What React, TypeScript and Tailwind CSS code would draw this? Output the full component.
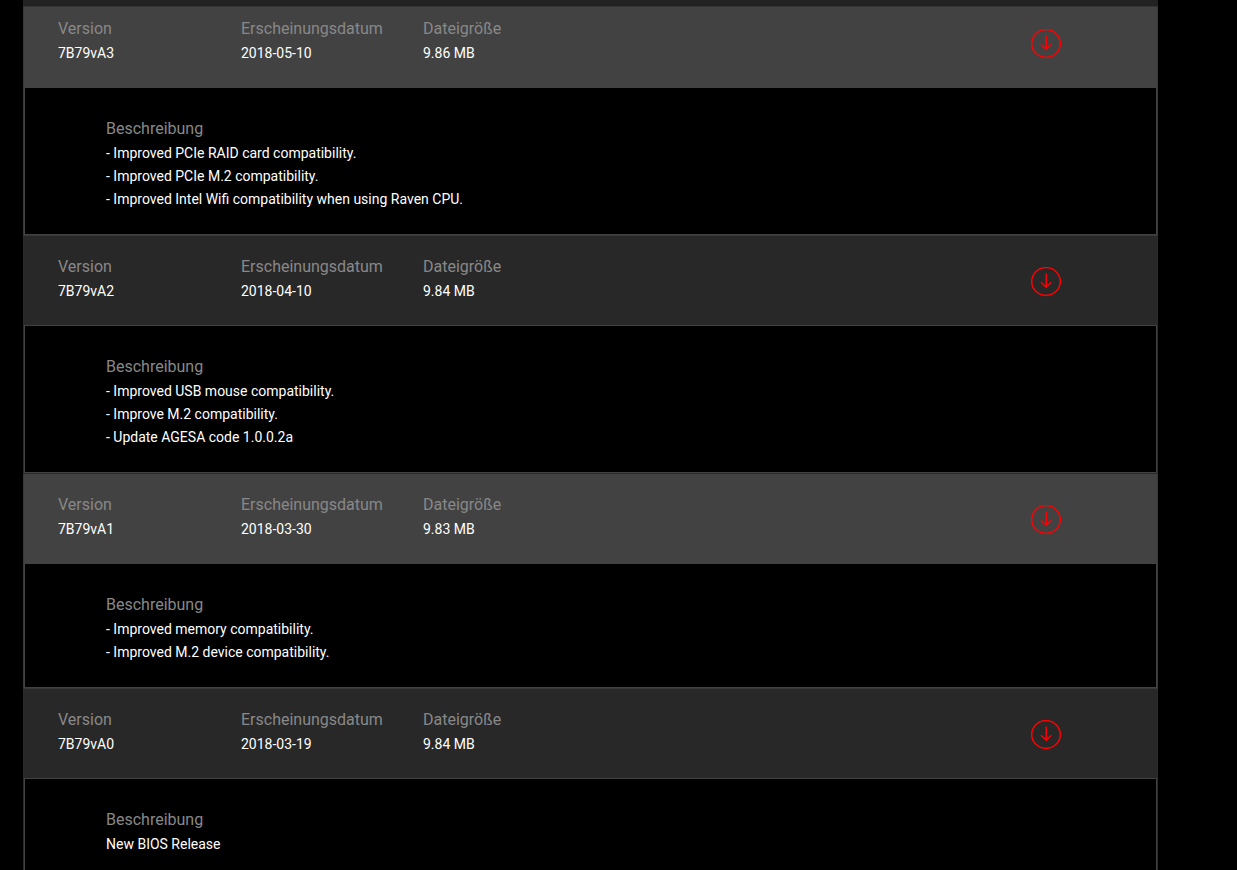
import clsx from 'clsx';

interface BiosRelease {
  version: string;
  date: string;
  size: string;
  notes: string[];
}

const releases: BiosRelease[] = [
  {
    version: '7B79vA3',
    date: '2018-05-10',
    size: '9.86 MB',
    notes: [
      '- Improved PCIe RAID card compatibility.',
      '- Improved PCIe M.2 compatibility.',
      '- Improved Intel Wifi compatibility when using Raven CPU.',
    ],
  },
  {
    version: '7B79vA2',
    date: '2018-04-10',
    size: '9.84 MB',
    notes: [
      '- Improved USB mouse compatibility.',
      '- Improve M.2 compatibility.',
      '- Update AGESA code 1.0.0.2a',
    ],
  },
  {
    version: '7B79vA1',
    date: '2018-03-30',
    size: '9.83 MB',
    notes: ['- Improved memory compatibility.', '- Improved M.2 device compatibility.'],
  },
  {
    version: '7B79vA0',
    date: '2018-03-19',
    size: '9.84 MB',
    notes: ['New BIOS Release'],
  },
];

function DownloadIcon() {
  return (
    <svg width="30" height="30" viewBox="0 0 30 30" fill="none" stroke="#ff0000" strokeWidth="1.5">
      <ellipse cx="15" cy="14.5" rx="14.3" ry="13.9" />
      <path d="M15.2 6.5V20.5M10 15.3L15.2 20.3L20.4 15.3" />
    </svg>
  );
}

function Field({ label, value }: { label: string; value: string }) {
  return (
    <div>
      <dt className="text-base leading-[27px] text-[#888888]">{label}</dt>
      <dd className="text-sm leading-[23px] text-white">{value}</dd>
    </div>
  );
}

function ReleaseEntry({ release, index }: { release: BiosRelease; index: number }) {
  const light = index % 2 === 0;

  return (
    <article className={clsx('border-x border-b', light ? 'border-[#383838]' : 'border-[#2b2b2b]')}>
      <div
        className={clsx(
          'flex items-start justify-between pb-[22px] pl-[34px] pr-24',
          light ? 'bg-[#424242]' : 'bg-[#282828]',
          index === 0 ? 'pt-2' : 'pt-[17px]',
        )}
      >
        <dl className="grid grid-cols-[183px_182px_182px]">
          <Field label="Version" value={release.version} />
          <Field label="Erscheinungsdatum" value={release.date} />
          <Field label="Dateigröße" value={release.size} />
        </dl>
        <a href="#" aria-label={`Download ${release.version}`} className="mt-[14px]">
          <DownloadIcon />
        </a>
      </div>

      {/* Description */}
      <div className="border border-[#424242] bg-black pt-[27px] pb-[23px] pl-[81px] pr-24">
        <h3 className="text-base leading-[27px] text-[#888888]">Beschreibung</h3>
        {release.notes.map((note) => (
          <p key={note} className="text-sm leading-[23px] text-white">
            {note}
          </p>
        ))}
      </div>
    </article>
  );
}

export default function App() {
  return (
    <div className="h-screen overflow-hidden bg-black font-['Roboto',sans-serif]">
      <main className="ml-[23px] mr-[79px]">
        <div className="h-[7px] border-b border-[#333333] bg-[#222222]" />
        {releases.map((release, index) => (
          <ReleaseEntry key={release.version} release={release} index={index} />
        ))}
      </main>
    </div>
  );
}
